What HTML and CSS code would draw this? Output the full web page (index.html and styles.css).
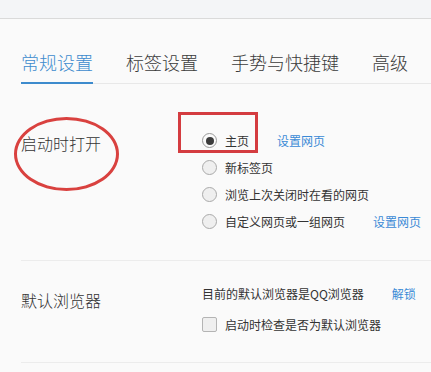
FILE: index.html
```html
<!DOCTYPE html>
<html lang="zh-CN">
<head>
<meta charset="utf-8">
<title>设置</title>
<link rel="stylesheet" href="styles.css">
</head>
<body>
<div class="topbar"></div>
<main class="content">
  <nav class="tabs">
    <span class="tab active">常规设置</span>
    <span class="tab">标签设置</span>
    <span class="tab">手势与快捷键</span>
    <span class="tab">高级</span>
  </nav>
  <section class="row startup">
    <div class="label">启动时打开</div>
    <div class="options">
      <div class="opt"><span class="radio checked"></span><span class="txt">主页</span><a class="link">设置网页</a></div>
      <div class="opt"><span class="radio"></span><span class="txt">新标签页</span></div>
      <div class="opt"><span class="radio"></span><span class="txt">浏览上次关闭时在看的网页</span></div>
      <div class="opt"><span class="radio"></span><span class="txt">自定义网页或一组网页</span><a class="link">设置网页</a></div>
    </div>
  </section>
  <section class="row default">
    <div class="label">默认浏览器</div>
    <div class="options">
      <div class="line"><span class="txt">目前的默认浏览器是QQ浏览器</span><a class="link">解锁</a></div>
      <div class="line"><span class="checkbox"></span><span class="txt">启动时检查是否为默认浏览器</span></div>
    </div>
  </section>
</main>
<div class="mark-ellipse"></div>
<div class="mark-rect"></div>
</body>
</html>
```
FILE: styles.css
```css
html, body {
  margin: 0;
  padding: 0;
}
body {
  position: relative;
  width: 431px;
  height: 372px;
  overflow: hidden;
  background: #fafafa;
  font-family: "Noto Sans CJK SC", "Noto Sans", sans-serif;
  color: #333;
}
.topbar {
  height: 18px;
  background: #f4f5f7;
  border-bottom: 1px solid #dadada;
}
.content {
  padding-left: 21px;
}
.tabs {
  display: flex;
  gap: 33px;
  padding-top: 31px;
  border-bottom: 1px solid #e8e8e8;
}
.tab {
  font-size: 18px;
  line-height: 24px;
  font-weight: 300;
  padding-bottom: 8px;
  border-bottom: 2px solid transparent;
  margin-bottom: -1px;
  color: #3a3a3a;
  white-space: nowrap;
}
.tab.active {
  color: #3d8bcd;
  border-bottom-color: #3d8bcd;
}
.row {
  display: flex;
  align-items: flex-start;
  border-bottom: 1px solid #ececec;
}
.label {
  width: 181px;
  flex: none;
  font-size: 16px;
  font-weight: 300;
  color: #333;
}
.startup {
  padding-top: 43px;
  padding-bottom: 25px;
}
.startup .label {
  line-height: 27px;
  margin-top: 3px;
}
.default {
  padding-top: 17px;
  padding-bottom: 23px;
}
.default .label {
  line-height: 30px;
  margin-top: 7px;
}
.options {
  display: flex;
  flex-direction: column;
}
.opt {
  display: flex;
  align-items: center;
  height: 27px;
}
.line {
  display: flex;
  align-items: center;
  height: 30px;
}
.line + .line {
  margin-top: 1px;
}
.txt {
  font-size: 12px;
  color: #333;
  white-space: nowrap;
}
.link {
  font-size: 12px;
  color: #3a8ad6;
  margin-left: 28px;
  white-space: nowrap;
  cursor: pointer;
}
.radio {
  box-sizing: border-box;
  width: 15px;
  height: 15px;
  border-radius: 50%;
  border: 1px solid #a9a9a9;
  background: #efefef;
  margin-right: 8px;
  display: flex;
  align-items: center;
  justify-content: center;
  flex: none;
}
.radio.checked {
  background: #fafafa;
  border-color: #999;
}
.radio.checked::after {
  content: "";
  width: 8px;
  height: 8px;
  border-radius: 50%;
  background: #3c3c3c;
}
.checkbox {
  box-sizing: border-box;
  width: 15px;
  height: 15px;
  border: 1px solid #b4b4b4;
  border-radius: 2px;
  background: #efefef;
  margin-right: 8px;
  flex: none;
}
.mark-ellipse {
  position: absolute;
  left: 14px;
  top: 117px;
  width: 105px;
  height: 74px;
  box-sizing: border-box;
  border: 3px solid #d9413f;
  border-radius: 50%;
}
.mark-rect {
  position: absolute;
  left: 178px;
  top: 112px;
  width: 80px;
  height: 41px;
  box-sizing: border-box;
  border: 3px solid #d43c40;
}
```
